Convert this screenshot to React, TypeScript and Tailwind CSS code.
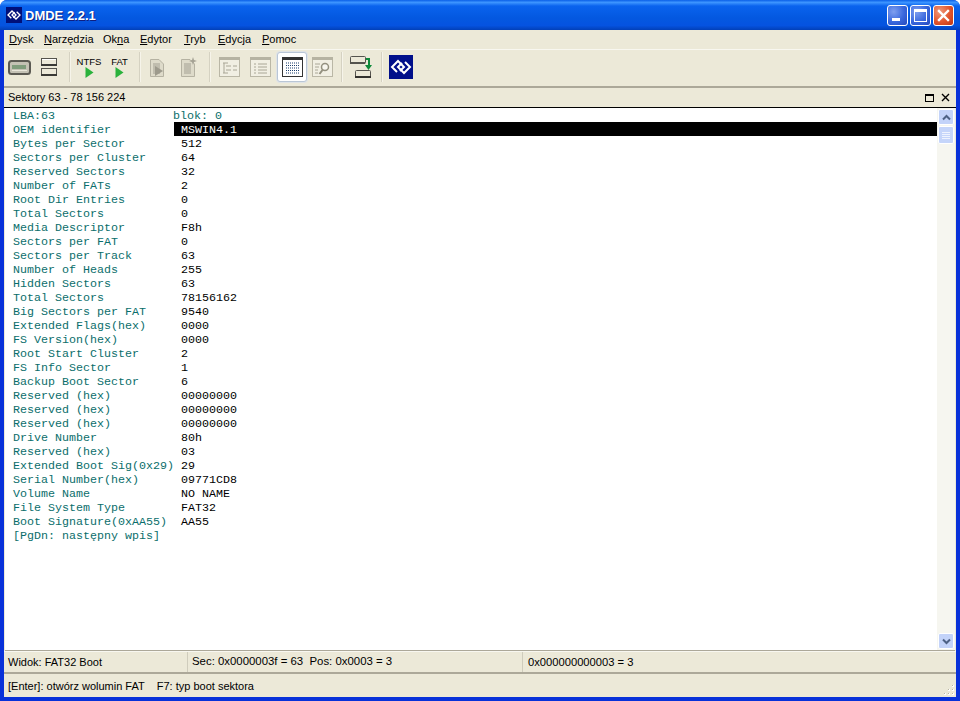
import React from 'react';

const rows: [string, string][] = [
  ['Bytes per Sector', '512'],
  ['Sectors per Cluster', '64'],
  ['Reserved Sectors', '32'],
  ['Number of FATs', '2'],
  ['Root Dir Entries', '0'],
  ['Total Sectors', '0'],
  ['Media Descriptor', 'F8h'],
  ['Sectors per FAT', '0'],
  ['Sectors per Track', '63'],
  ['Number of Heads', '255'],
  ['Hidden Sectors', '63'],
  ['Total Sectors', '78156162'],
  ['Big Sectors per FAT', '9540'],
  ['Extended Flags(hex)', '0000'],
  ['FS Version(hex)', '0000'],
  ['Root Start Cluster', '2'],
  ['FS Info Sector', '1'],
  ['Backup Boot Sector', '6'],
  ['Reserved (hex)', '00000000'],
  ['Reserved (hex)', '00000000'],
  ['Reserved (hex)', '00000000'],
  ['Drive Number', '80h'],
  ['Reserved (hex)', '03'],
  ['Extended Boot Sig(0x29)', '29'],
  ['Serial Number(hex)', '09771CD8'],
  ['Volume Name', 'NO NAME'],
  ['File System Type', 'FAT32'],
  ['Boot Signature(0xAA55)', 'AA55'],
];

const Logo = ({ size, bg }: { size: number; bg: string }) => (
  <svg width={size} height={size} viewBox="0 0 24 24" className="shrink-0">
    <rect width="24" height="24" fill={bg} />
    <path d="M8 17 L3 12 L9 6 L15 12 L11 16" fill="none" stroke="#fff" strokeWidth="2" />
    <path d="M16 7 L21 12 L15 18 L9 12 L13 8" fill="none" stroke="#fff" strokeWidth="2" />
  </svg>
);

const Play = () => (
  <svg width="9" height="11" viewBox="0 0 9 11">
    <path d="M0.500 0 L8.500 5.500 L0.500 11 Z" fill="#2ab23c" />
  </svg>
);

const Sep = ({ ml }: { ml: string }) => <div className={`${ml} w-[2px] h-[30px] bg-[#d5d2c2] border-r border-[#f6f4ea] shrink-0`} />;

const DriveOne = () => (
  <svg width="23" height="15" viewBox="0 0 23 15" className="ml-[4px] shrink-0">
    <rect x="1" y="1" width="21" height="13" rx="2.500" fill="#c3c1b4" stroke="#5b5a53" strokeWidth="2" />
    <rect x="4" y="5" width="14" height="4" fill="#7f9c7c" />
    <rect x="4" y="10" width="15" height="1" fill="#e8e6da" />
  </svg>
);

const DriveTwo = () => (
  <svg width="16" height="18" viewBox="0 0 16 18" className="ml-[10px] shrink-0">
    <rect x="0.500" y="0.500" width="15" height="7" fill="#ece9d8" stroke="#55544e" />
    <rect x="1" y="1" width="14" height="1" fill="#fff" />
    <rect x="0" y="6" width="16" height="2" fill="#3a3a36" />
    <rect x="0.500" y="10.500" width="15" height="7" fill="#ece9d8" stroke="#55544e" />
    <rect x="0" y="16" width="16" height="2" fill="#3a3a36" />
  </svg>
);

const GrayDoc = ({ ml, star }: { ml: string; star?: boolean }) => (
  <svg width="18" height="21" viewBox="0 0 18 21" className={`${ml} shrink-0`}>
    <path d="M2.500 2.500 H11 L15.500 7 V19.500 H2.500 Z" fill="#dedbca" stroke="#b5b2a2" />
    <rect x="5" y="6" width="7" height="11" fill="#b8b5a6" opacity="0.8" />
    {star ? (
      <path d="M14 0 L15 3 L18 4 L15 5 L14 8 L13 5 L10 4 L13 3 Z" fill="#a5a294" />
    ) : (
      <path d="M7 9 L15 14 L7 19 Z" fill="#9d9a8c" />
    )}
  </svg>
);

const ListIcon = ({ ml, kind }: { ml: string; kind: 'tree' | 'list' | 'find' }) => (
  <svg width="21" height="20" viewBox="0 0 21 20" className={`${ml} shrink-0`}>
    <rect x="0.500" y="0.500" width="20" height="19" fill="#f1efe3" stroke="#bab7a6" />
    <rect x="0" y="0" width="21" height="3" fill="#b6b3a2" />
    {kind === 'tree' && (
      <path d="M4 6 H9 M7 9 H12 M7 13 H12 M4 16 H9 M14 9 H18 M14 13 H18 M5 6 V16" stroke="#a9a696" fill="none" />
    )}
    {kind === 'list' && (
      <path d="M4 7 H6 M8 7 H17 M4 10 H6 M8 10 H17 M4 13 H6 M8 13 H17 M4 16 H6 M8 16 H17" stroke="#a9a696" fill="none" />
    )}
    {kind === 'find' && (
      <>
        <path d="M3 7 H8 M3 10 H7 M3 13 H6 M3 16 H6" stroke="#a9a696" fill="none" />
        <circle cx="13" cy="10" r="3.500" fill="#f7f6ee" stroke="#93907f" strokeWidth="1.500" />
        <path d="M10.500 13 L7.500 17" stroke="#93907f" strokeWidth="2" />
      </>
    )}
  </svg>
);

const ActiveGrid = () => (
  <div className="ml-[6px] w-[30px] h-[30px] shrink-0 rounded-[3px] bg-white border border-[#b9c6d6] shadow-[0_0_0_1px_#dfe3e6] flex items-center justify-center">
    <svg width="21" height="20" viewBox="0 0 21 20">
      <rect x="0.500" y="0.500" width="20" height="19" fill="#fff" stroke="#333" />
      <rect x="0" y="0" width="21" height="3" fill="#333" />
      <path d="M4 6 H17 M4 8.500 H17 M4 11 H17 M4 13.500 H17 M4 16 H17" stroke="#1c3f6e" strokeDasharray="1 1" fill="none" />
    </svg>
  </div>
);

const CopyIcon = () => (
  <svg width="22" height="24" viewBox="0 0 22 24" className="ml-[7px] shrink-0">
    <rect x="0.500" y="1.500" width="15" height="7" rx="1" fill="#ece9d8" stroke="#55544e" />
    <rect x="0" y="7" width="15" height="2" fill="#55544e" />
    <rect x="5.500" y="15.500" width="15" height="7" rx="1" fill="#ece9d8" stroke="#55544e" />
    <rect x="5" y="21" width="16" height="2" fill="#33322e" />
    <path d="M16 4 H19 V11" fill="none" stroke="#0f8a3a" strokeWidth="2" />
    <path d="M15 10 H22 L18.500 15 Z" fill="#0f8a3a" />
  </svg>
);

const TitleButton = ({ kind }: { kind: 'min' | 'max' | 'close' }) => {
  const bg =
    kind === 'close'
      ? 'bg-[radial-gradient(circle_at_30%_30%,#ee9a7c,#e2552d_55%,#bf3512)]'
      : 'bg-[radial-gradient(circle_at_30%_30%,#7f9fef,#3a68dd_55%,#2449bd)]';
  return (
    <div className={`w-[21px] h-[21px] rounded-[3px] border border-white flex items-center justify-center shrink-0 relative ${bg}`}>
      {kind === 'min' && <div className="absolute left-[4px] bottom-[4px] w-[8px] h-[3px] bg-white" />}
      {kind === 'max' && <div className="w-[13px] h-[13px] border border-white border-t-[3px]" />}
      {kind === 'close' && (
        <svg width="13" height="13" viewBox="0 0 13 13">
          <path d="M2 2 L11 11 M11 2 L2 11" stroke="#fff" strokeWidth="2.400" strokeLinecap="square" />
        </svg>
      )}
    </div>
  );
};

const ScrollArrow = ({ up }: { up?: boolean }) => (
  <div className="w-[16px] h-[16px] rounded-[2px] border border-white bg-[#c3d3f9] flex items-center justify-center">
    <svg width="9" height="7" viewBox="0 0 9 7">
      <path d={up ? 'M1 5.500 L4.500 2 L8 5.500' : 'M1 1.500 L4.500 5 L8 1.500'} fill="none" stroke="#4d6185" strokeWidth="2" />
    </svg>
  </div>
);

const Menu = ({ w, pre, u, post }: { w: string; pre?: string; u: string; post: string }) => (
  <span className={`${w} shrink-0`}>
    {pre}
    <span className="underline">{u}</span>
    {post}
  </span>
);

export default function App() {
  return (
    <div className="w-[960px] h-[701px] overflow-hidden flex flex-col rounded-t-[7px] bg-[#0831d9] font-['Liberation_Sans',sans-serif] text-[11px] text-black">
      <div className="h-[30px] shrink-0 flex items-center bg-[linear-gradient(180deg,#0a5fe8_0%,#3d95ff_8%,#0a63ee_20%,#0458e0_60%,#0553e0_85%,#0240b8_100%)]">
        <div className="ml-[6px] flex"><Logo size={16} bg="#00107a" /></div>
        <span className="ml-[3px] pt-[1px] text-[13px] font-bold text-white [text-shadow:1px_1px_0_#0f1f80]">DMDE 2.2.1</span>
        <div className="ml-auto mr-[6px] flex gap-[2px]">
          <TitleButton kind="min" />
          <TitleButton kind="max" />
          <TitleButton kind="close" />
        </div>
      </div>

      <div className="flex-1 min-h-0 mx-[4px] mb-[4px] flex flex-col bg-[#ece9d8]">
        <div className="h-[20px] shrink-0 pl-[5px] flex items-center border-b border-[#f8f7f0]">
          <Menu w="w-[35px]" u="D" post="ysk" />
          <Menu w="w-[59px]" u="N" post="arzędzia" />
          <Menu w="w-[37px]" pre="Ok" u="n" post="a" />
          <Menu w="w-[44px]" u="E" post="dytor" />
          <Menu w="w-[34px]" u="T" post="ryb" />
          <Menu w="w-[44px]" u="E" post="dycja" />
          <Menu w="w-[40px]" u="P" post="omoc" />
        </div>

        <div className="h-[38px] shrink-0 pb-[2px] flex items-center border-b-2 border-[#aca899]">
          <DriveOne />
          <DriveTwo />
          <Sep ml="ml-[12px]" />
          <div className="ml-[6px] w-[24px] flex flex-col items-center shrink-0 text-[9.500px] leading-[11px]">
            NTFS
            <Play />
          </div>
          <div className="ml-[10px] w-[17px] flex flex-col items-center shrink-0 text-[9.500px] leading-[11px]">
            FAT
            <Play />
          </div>
          <Sep ml="ml-[11px]" />
          <GrayDoc ml="ml-[7px]" />
          <GrayDoc ml="ml-[13px]" star />
          <Sep ml="ml-[12px]" />
          <ListIcon ml="ml-[8px]" kind="tree" />
          <ListIcon ml="ml-[10px]" kind="list" />
          <ActiveGrid />
          <ListIcon ml="ml-[5px]" kind="find" />
          <Sep ml="ml-[8px]" />
          <CopyIcon />
          <Sep ml="ml-[9px]" />
          <div className="ml-[6px] flex"><Logo size={24} bg="#000f8a" /></div>
        </div>

        <div className="h-[20px] shrink-0 flex items-center border-b border-black">
          <span className="ml-[4px]">Sektory 63 - 78 156 224</span>
          <div className="ml-auto mr-[6px] flex items-center">
            <div className="w-[9px] h-[8px] border border-black border-t-2" />
            <svg width="9" height="9" viewBox="0 0 9 9" className="ml-[7px]">
              <path d="M1 1 L8 8 M8 1 L1 8" stroke="#000" strokeWidth="1.400" />
            </svg>
          </div>
        </div>

        <div className="flex-1 min-h-0 flex border-b border-[#aca899] mx-[1px] bg-white">
          <div className="flex-1 min-w-0 font-['Liberation_Mono',monospace] text-[11.670px] leading-[16px] text-[#0a6e6b] whitespace-pre">
            <div className="flex h-[14px]">
              <span className="ml-[8px] w-[160px] shrink-0">LBA:63</span>
              <span>blok: 0</span>
            </div>
            <div className="flex h-[14px]">
              <span className="ml-[8px] w-[161px] shrink-0">OEM identifier</span>
              <span className="flex-1 bg-black text-white pl-[7px]">MSWIN4.1</span>
            </div>
            {rows.map(([label, value], index) => (
              <div key={index} className="flex h-[14px]">
                <span className="ml-[8px] w-[168px] shrink-0">{label}</span>
                <span className="text-black">{value}</span>
              </div>
            ))}
            <div className="h-[14px] ml-[8px]">[PgDn: następny wpis]</div>
          </div>
          <div className="w-[18px] shrink-0 bg-[#f6f6f0] flex flex-col items-center py-[1px]">
            <ScrollArrow up />
            <div className="mt-[1px] w-[16px] h-[18px] rounded-[2px] border border-white bg-[#c5d5fa] flex flex-col items-center justify-center gap-[1px]">
              <div className="w-[8px] h-px bg-[#eef3fe]" />
              <div className="w-[8px] h-px bg-[#eef3fe]" />
              <div className="w-[8px] h-px bg-[#eef3fe]" />
              <div className="w-[8px] h-px bg-[#eef3fe]" />
            </div>
            <div className="mt-auto"><ScrollArrow /></div>
          </div>
        </div>

        <div className="h-[23px] shrink-0 flex items-center border-b-2 border-[#aca899] border-t border-t-[#f8f7f0]">
          <span className="ml-[4px] w-[179px] shrink-0">Widok: FAT32 Boot</span>
          <div className="w-px h-full bg-[#cfccbc]" />
          <span className="ml-[4px] w-[330px] shrink-0 whitespace-pre text-[11.400px]">Sec: 0x0000003f = 63  Pos: 0x0003 = 3</span>
          <div className="w-px h-full bg-[#cfccbc]" />
          <span className="ml-[5px] text-[11.200px]">0x000000000003 = 3</span>
        </div>

        <div className="h-[23px] shrink-0 pt-[2px] flex items-center relative">
          <span className="ml-[4px] whitespace-pre">[Enter]: otwórz wolumin FAT    F7: typ boot sektora</span>
          <svg width="12" height="12" viewBox="0 0 12 12" className="absolute right-[1px] bottom-[1px]">
            <path d="M9 1h2v2H9zM5 5h2v2H5zM9 5h2v2H9zM1 9h2v2H1zM5 9h2v2H5zM9 9h2v2H9z" fill="#fff" />
            <path d="M9 1h1v1H9zM5 5h1v1H5zM9 5h1v1H9zM1 9h1v1H1zM5 9h1v1H5zM9 9h1v1H9z" fill="#b8b5a4" />
          </svg>
        </div>
      </div>
    </div>
  );
}
